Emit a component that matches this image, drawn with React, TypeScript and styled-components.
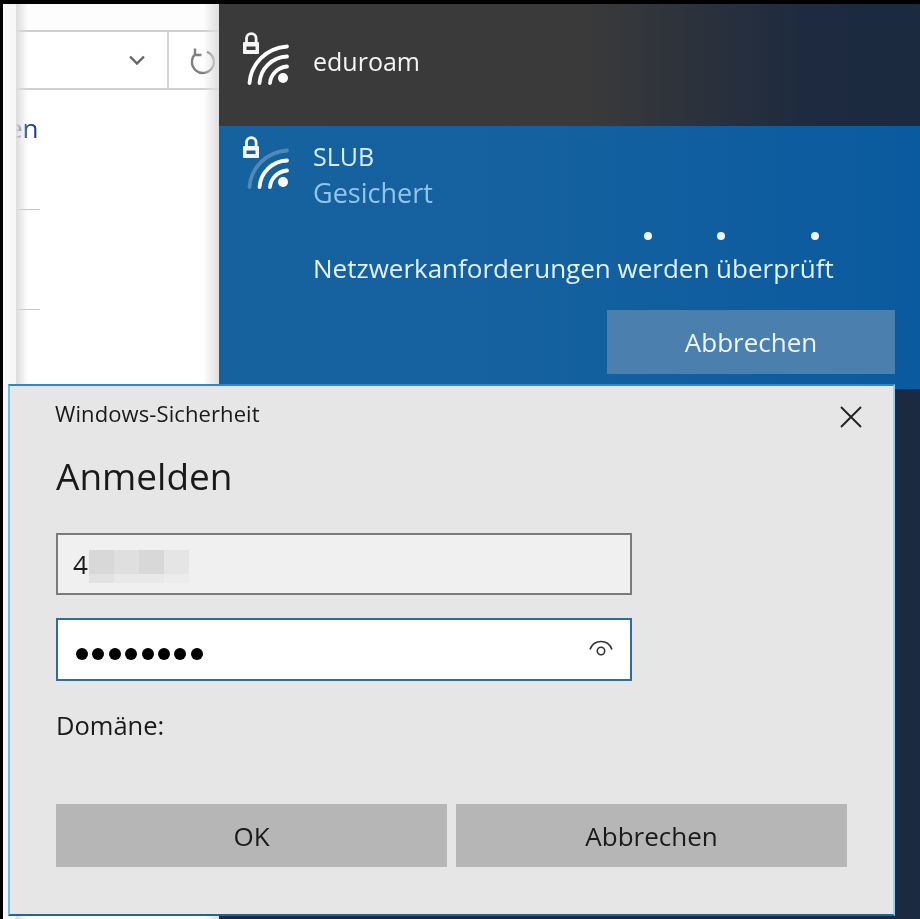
import React from "react";
import styled, { createGlobalStyle } from "styled-components";

const Global = createGlobalStyle`
  html, body { margin: 0; padding: 0; background: #000; overflow: hidden; }
  * { box-sizing: border-box; }
`;

const font = `"Open Sans", "Noto Sans", "Liberation Sans", sans-serif`;

const Screen = styled.div`
  position: relative;
  width: 920px;
  height: 919px;
  background: #000;
  padding: 4px 0 0 3px;
  display: flex;
  overflow: hidden;
  font-family: ${font};
  filter: blur(0.35px);
`;

const Strip = styled.div`
  width: 13px;
  flex: none;
  background: #f7f7f7;
`;

const Browser = styled.div`
  position: relative;
  width: 203px;
  flex: none;
  background: #fff;
  overflow: hidden;
  &::before, &::after {
    content: "";
    position: absolute;
    top: 0;
    bottom: 0;
    pointer-events: none;
  }
  &::before {
    left: 0;
    width: 12px;
    background: linear-gradient(to right, #dcdcdc, rgba(255,255,255,0));
  }
  &::after {
    right: 0;
    width: 16px;
    background: linear-gradient(to left, #dedede, rgba(255,255,255,0));
  }
`;

const TabBar = styled.div`
  height: 26px;
  background: #fdfdfd;
`;

const AddressRow = styled.div`
  height: 60px;
  display: flex;
  border-top: 2px solid #cfcfcf;
  border-bottom: 2px solid #d2d2d2;
`;

const AddressField = styled.div`
  width: 153px;
  flex: none;
  display: flex;
  align-items: center;
  justify-content: flex-end;
  padding-right: 21px;
  border-right: 2px solid #d4d4d4;
  color: #666;
`;

const RefreshCell = styled.div`
  flex: 1;
  display: flex;
  align-items: center;
  padding: 2px 0 0 21px;
  color: #808080;
`;

const Link = styled.a`
  display: block;
  margin: 20px 0 0 -8px;
  font-size: 26px;
  line-height: 36px;
  color: #1f3f8f;
`;

const Rule = styled.div<{ $gap: number }>`
  width: 24px;
  height: 1px;
  background: #c4c4c4;
  margin-top: ${(p) => p.$gap}px;
`;

const Flyout = styled.div`
  flex: 1;
  background: #1b2a40;
  color: #fff;
`;

const NetworkRow = styled.div`
  height: 122px;
  display: flex;
  padding: 27px 0 0 21px;
  gap: 17px;
  background: linear-gradient(to right, #3a3a3a 0%, #3a3a3a 52%, #1d2a3f 84%, #1c2a40 100%);
`;

const NetworkName = styled.div`
  margin-top: 12px;
  font-size: 25px;
  line-height: 36px;
  color: #f4f4f4;
`;

const Selected = styled.div`
  height: 263px;
  padding: 9px 0 0 21px;
  background: linear-gradient(to right, #15629f 0%, #15619f 45%, #0a5a9f 100%);
`;

const SelectedHead = styled.div`
  display: flex;
  gap: 17px;
  height: 97px;
`;

const NetworkText = styled.div`
  margin-top: 3px;
  font-size: 25px;
  line-height: 36px;
`;

const Ssid = styled.div`
  color: #d8effc;
`;

const Status = styled.div`
  margin-top: 1px;
  color: #93c4ea;
  font-size: 27px;
`;

const SelectedBody = styled.div`
  margin-left: 73px;
`;

const Dots = styled.div`
  display: flex;
  height: 8px;
  margin-left: 331px;
`;

const Dot = styled.span<{ $gap: number }>`
  width: 8px;
  height: 8px;
  border-radius: 50%;
  background: #eef7fd;
  margin-left: ${(p) => p.$gap}px;
`;

const Progress = styled.div`
  margin-top: 10px;
  font-size: 26px;
  line-height: 36px;
  color: #e2f2fc;
  white-space: nowrap;
`;

const CancelLight = styled.div`
  margin: 24px 0 0 294px;
  width: 288px;
  height: 64px;
  background: #4a7fae;
  display: flex;
  align-items: center;
  justify-content: center;
  font-size: 26px;
  color: #eef6fc;
`;

const Dialog = styled.div`
  position: absolute;
  left: 8px;
  top: 384px;
  width: 887px;
  height: 532px;
  background: #e6e6e6;
  border-style: solid;
  border-width: 2px;
  border-color: #2f86c4 #8fd0f5 #1f6596 #6fbde9;
  padding: 14px 0 0 46px;
  color: #1a1a1a;
`;

const TitleBar = styled.div`
  display: flex;
  align-items: center;
  justify-content: space-between;
  height: 30px;
  padding: 4px 31px 0 0;
`;

const Title = styled.div`
  margin: -8px 0 0 -1px;
  font-size: 22px;
  letter-spacing: 0.1px;
  line-height: 30px;
`;

const Heading = styled.h1`
  margin: 21px 0 0;
  font-size: 37px;
  line-height: 50px;
  font-weight: 400;
`;

const Field = styled.div<{ $focused?: boolean }>`
  width: 576px;
  height: ${(p) => (p.$focused ? 63 : 62)}px;
  margin-top: ${(p) => (p.$focused ? 23 : 32)}px;
  border: 2px solid ${(p) => (p.$focused ? "#2b6e9e" : "#7b7b7b")};
  background: ${(p) => (p.$focused ? "#fff" : "#f0f0f0")};
  display: flex;
  align-items: center;
  padding-left: 15px;
  font-size: 26px;
  position: relative;
`;

const Redacted = styled.div`
  display: grid;
  grid-template-columns: repeat(4, 25px);
  grid-template-rows: 24px 9px;
  margin-left: 1px;
  margin-top: 4px;
`;

const Pixel = styled.span<{ $shade: string }>`
  background: ${(p) => p.$shade};
`;

const Secret = styled.div`
  display: flex;
  gap: 4.4px;
  margin: 8px 0 0 3px;
`;

const SecretDot = styled.span`
  width: 12px;
  height: 12px;
  border-radius: 50%;
  background: #000;
`;

const Reveal = styled.svg`
  position: absolute;
  right: 16px;
  top: 19px;
`;

const Domain = styled.div`
  margin-top: 29px;
  font-size: 25.5px;
  line-height: 30px;
`;

const Buttons = styled.div`
  display: flex;
  gap: 9px;
  margin-top: 64px;
`;

const DialogButton = styled.div`
  width: 391px;
  height: 63px;
  background: #b6b6b6;
  display: flex;
  align-items: center;
  justify-content: center;
  font-size: 26px;
  color: #1a1a1a;
`;

const WifiIcon = ({ faint, tint }: { faint?: boolean; tint: string }) => (
  <svg width="56" height="62" viewBox="0 0 56 62" fill="none" style={{ flex: "none" }}>
    <path d="M6.5 12V7.5a4.8 4.8 0 0 1 9.6 0V12" stroke="#f6f6f6" strokeWidth="2.8" />
    <rect x="3" y="11" width="16" height="12" rx="1" fill="#f6f6f6" />
    <rect x="6.5" y="15.5" width="9" height="3.5" fill={tint} />
    <path
      d="M9.5 52 C11 33 26 17 47 15.5"
      stroke="#fff"
      strokeOpacity={faint ? 0.25 : 1}
      strokeWidth="3.8"
      strokeLinecap="round"
    />
    <path d="M19.5 52 C20.5 38 32 26 47 25.5" stroke="#fff" strokeWidth="3.8" strokeLinecap="round" />
    <path d="M30 52 C30.5 44 38 36 47 35.5" stroke="#fff" strokeWidth="3.8" strokeLinecap="round" />
    <circle cx="43" cy="47" r="5" fill="#fff" />
  </svg>
);

const Chevron = () => (
  <svg width="18" height="12" viewBox="0 0 18 12" fill="none">
    <path d="M2 2.5 9 9.5 16 2.5" stroke="currentColor" strokeWidth="2.4" />
  </svg>
);

const Refresh = () => (
  <svg width="26" height="28" viewBox="0 0 26 28" fill="none" style={{ flex: "none" }}>
    <path d="M17 4.8A11 11 0 1 1 6 6.5" stroke="currentColor" strokeWidth="2.4" />
    <path d="M5 1.5V8h6.5" stroke="currentColor" strokeWidth="2.4" />
  </svg>
);

const Close = () => (
  <svg width="22" height="22" viewBox="0 0 22 22" fill="none">
    <path d="M1 1 21 21M21 1 1 21" stroke="#222" strokeWidth="1.9" />
  </svg>
);

const pixels = ["#d8d8d8", "#dfdfdf", "#d8d8d8", "#e5e5e5", "#e2e2e2", "#e9e9e9", "#e9e9e9", "#ececec"];

export default function App() {
  return (
    <Screen>
      <Global />
      <Strip />
      <Browser>
        <TabBar />
        <AddressRow>
          <AddressField>
            <Chevron />
          </AddressField>
          <RefreshCell>
            <Refresh />
          </RefreshCell>
        </AddressRow>
        <Link>en</Link>
        <Rule $gap={63} />
        <Rule $gap={99} />
      </Browser>
      <Flyout>
        <NetworkRow>
          <WifiIcon tint="#3a3a3a" />
          <NetworkName>eduroam</NetworkName>
        </NetworkRow>
        <Selected>
          <SelectedHead>
            <WifiIcon faint tint="#15629f" />
            <NetworkText>
              <Ssid>SLUB</Ssid>
              <Status>Gesichert</Status>
            </NetworkText>
          </SelectedHead>
          <SelectedBody>
            <Dots>
              <Dot $gap={0} />
              <Dot $gap={65} />
              <Dot $gap={86} />
            </Dots>
            <Progress>Netzwerkanforderungen werden überprüft</Progress>
            <CancelLight>Abbrechen</CancelLight>
          </SelectedBody>
        </Selected>
      </Flyout>
      <Dialog>
        <TitleBar>
          <Title>Windows-Sicherheit</Title>
          <Close />
        </TitleBar>
        <Heading>Anmelden</Heading>
        <Field>
          4
          <Redacted>
            {pixels.map((shade, i) => (
              <Pixel key={i} $shade={shade} />
            ))}
          </Redacted>
        </Field>
        <Field $focused>
          <Secret>
            {Array.from({ length: 8 }, (_, i) => (
              <SecretDot key={i} />
            ))}
          </Secret>
          <Reveal width="26" height="20" viewBox="0 0 26 20" fill="none">
            <path d="M2 10.5C4 5 8 2.5 13 2.5s9 2.5 11 8" stroke="#333" strokeWidth="1.5" />
            <circle cx="13" cy="12" r="3.7" stroke="#333" strokeWidth="1.6" />
          </Reveal>
        </Field>
        <Domain>Domäne:</Domain>
        <Buttons>
          <DialogButton>OK</DialogButton>
          <DialogButton>Abbrechen</DialogButton>
        </Buttons>
      </Dialog>
    </Screen>
  );
}
